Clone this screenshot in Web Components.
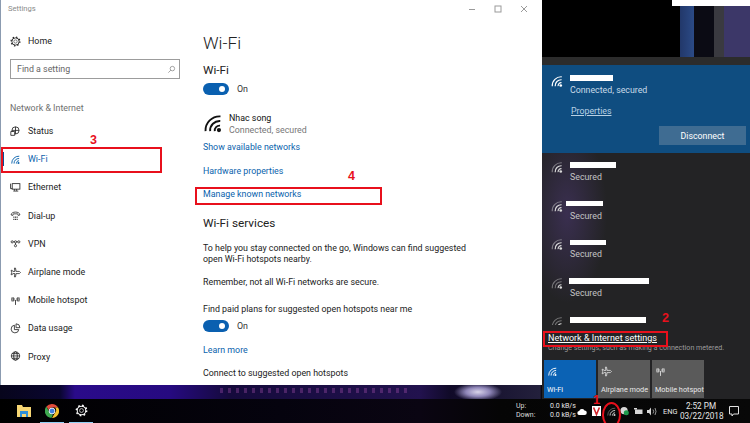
<!DOCTYPE html>
<html lang="en"><head><meta charset="utf-8"><title>Wi-Fi settings</title>
<style>
html,body{margin:0;padding:0;background:#000;overflow:hidden}
body{font-family:Roboto,"Liberation Sans",sans-serif}
</style></head><body>
<ui-desktop>
  <settings-window slot="window"></settings-window>
  <network-flyout slot="flyout"></network-flyout>
  <task-bar slot="bar"></task-bar>
  <red-box style="left:1px;top:147px;width:157px;height:22px"></red-box>
  <red-box style="left:195px;top:187px;width:183px;height:14px"></red-box>
  <red-box style="left:543px;top:331px;width:121px;height:12px"></red-box>
  <red-num style="left:90px;top:133px">3</red-num>
  <red-num style="left:348px;top:169px">4</red-num>
  <red-num style="left:662px;top:311px">2</red-num>
  <red-num style="left:593px;top:393px">1</red-num>
  <red-ring></red-ring>
</ui-desktop>
<script>
const wifiPath=(o)=>`<circle cx="15.4" cy="16.4" r="1.9" fill="currentColor"/><g fill="none" stroke="currentColor" stroke-width="1.7">
 <path d="M11.6 17.4A4.4 4.4 0 0 1 16.4 12.4"/>
 <path d="M7.4 17.4A8.6 8.6 0 0 1 16.6 8.2"/></g>
 <g fill="none" stroke="currentColor" stroke-width="1.7" opacity="${o}"><path d="M3.2 17.4A12.8 12.8 0 0 1 16.8 4"/></g>`;
const ICONS={
 wifi:wifiPath(1),
 wifiweak:`<circle cx="15.4" cy="16.4" r="1.8" fill="currentColor"/><g fill="none" stroke="currentColor" stroke-width="1.5"><path d="M11.6 17.4A4.4 4.4 0 0 1 16.4 12.4"/></g><g fill="none" stroke="currentColor" stroke-width="1.5" opacity=".45"><path d="M7.4 17.4A8.6 8.6 0 0 1 16.6 8.2"/><path d="M3.2 17.4A12.8 12.8 0 0 1 16.8 4"/></g>`,
 wifimid:wifiPath(.45),
 gear:`<g fill="none" stroke="currentColor"><circle cx="10" cy="10" r="3"/><circle cx="10" cy="10" r="6.6" stroke-width="1.6"/><circle cx="10" cy="10" r="8" stroke-width="2.2" stroke-dasharray="2.6 3.68"/></g>`,
 globe:`<g fill="none" stroke="currentColor" stroke-width="1.5"><circle cx="10" cy="9" r="7.6"/><path d="M2.4 9h15.2M4 4.8h12M4 13.2h12"/><ellipse cx="10" cy="9" rx="3.4" ry="7.6"/></g>`,
 status:`<g fill="none" stroke="currentColor" stroke-width="1.5"><circle cx="10" cy="8" r="6.5"/><path d="M3.5 8h13M10 1.5v13"/><path d="M1.5 10v7h7v-7z" fill="#fff"/></g>`,
 ethernet:`<g fill="none" stroke="currentColor" stroke-width="1.5"><rect x="4" y="3" width="14" height="10"/><path d="M1 3v9h3M8 13v3M12 13v3M6 16.5h9"/></g>`,
 dial:`<g fill="none" stroke="currentColor" stroke-width="1.4"><path d="M2 9c0-7 16-7 16 0l-3 1-1-3H6L5 10z"/></g><g fill="currentColor"><rect x="6" y="12" width="2" height="2"/><rect x="9" y="12" width="2" height="2"/><rect x="12" y="12" width="2" height="2"/><rect x="6" y="16" width="2" height="2"/><rect x="9" y="16" width="2" height="2"/><rect x="12" y="16" width="2" height="2"/></g>`,
 vpn:`<g fill="none" stroke="currentColor" stroke-width="1.4"><circle cx="4" cy="7" r="2"/><circle cx="10" cy="7" r="2"/><circle cx="16" cy="7" r="2"/><path d="M6 7h2M12 7h2M10 9v3"/><circle cx="10" cy="14" r="2"/></g>`,
 plane:`<path fill="none" stroke="currentColor" stroke-width="1.4" d="M8 2h2l1 6h6l2 2-2 2h-6l-1 6H8l1-6H5l-1 2H2l1-4-1-4h2l1 2h4z"/>`,
 hotspot:`<g fill="none" stroke="currentColor" stroke-width="1.5"><path d="M10 9v9M4 4q-2 4 0 8M16 4q2 4 0 8"/><rect x="5.6" y="5" width="1.6" height="6" rx=".8"/><rect x="12.8" y="5" width="1.6" height="6" rx=".8"/></g>`,
 data:`<g fill="none" stroke="currentColor" stroke-width="1.5"><path d="M8 4a7 7 0 1 0 8 8H8z"/><path d="M11 1.5a7 7 0 0 1 7 7h-7z"/></g>`,
 search:`<g fill="none" stroke="currentColor" stroke-width="1.3"><circle cx="12" cy="8" r="5"/><path d="M8.5 11.5L3 17"/></g>`
};
function def(name,css,html){
 customElements.define(name,class extends HTMLElement{
  connectedCallback(){ if(this.shadowRoot)return;
   const s=this.attachShadow({mode:'open'});
   const h=typeof html==='function'?html(this):html;
   s.innerHTML=`<style>${css}</style>${h}`;
  }
 });
}
def('ui-icon',`:host{display:inline-block;width:var(--s,12px);height:var(--s,12px);flex:none;line-height:0}svg{width:100%;height:100%;display:block}`,
 el=>`<svg viewBox="0 0 20 20">${ICONS[el.getAttribute('name')]||''}</svg>`);

def('ui-desktop',`
:host{display:grid;grid-template-columns:542px 208px;grid-template-rows:399px 24px;width:750px;height:423px;position:relative;overflow:hidden;
 background:
 radial-gradient(ellipse 24px 9px at 478px 392px,#d9d4ea 0,#8f86b8 50%,transparent 100%),
 repeating-linear-gradient(90deg,rgba(190,90,190,.3) 0 3px,transparent 3px 8px) 220px 388px/190px 5px no-repeat,
 linear-gradient(90deg,#07051c 0,#0a0630 60px,#2a0b8a 75px,#260a80 170px,#150a3c 230px,#22124e 420px,#100a28 450px,#23203c 540px,#000 542px);
}
::slotted([slot=window]){grid-column:1;grid-row:1}
::slotted([slot=flyout]){grid-column:2;grid-row:1}
::slotted([slot=bar]){grid-column:1/3;grid-row:2}
`,`<slot name="window"></slot><slot name="flyout"></slot><slot name="bar"></slot><slot></slot>`);

def('red-box',`:host{position:absolute;display:block;border:2px solid #e8101c;z-index:5}`,``);
def('red-num',`:host{position:absolute;display:block;z-index:6;color:#e8101c;font:700 12.5px/15px "Liberation Sans",sans-serif}`,`<slot></slot>`);
def('red-ring',`:host{position:absolute;display:block;z-index:6;left:602px;top:402px;width:15px;height:22px;border:2px solid #e8101c;border-radius:50%}`,``);

def('nav-item',`
:host{display:flex;align-items:center;height:28.2px;padding-left:10px;gap:7px;color:#222;font-size:8.9px;position:relative;--s:11px}
:host([active]){color:#0a63ad}
:host([active])::before{content:"";position:absolute;left:2px;top:7px;width:1.5px;height:14px;background:#0a4f96}
`,el=>`<ui-icon name="${el.getAttribute('icon')}"></ui-icon><span><slot></slot></span>`);

def('ui-toggle',`
:host{display:flex;align-items:center;gap:8px;height:12px;font-size:8.9px;color:#333}
i{display:block;width:26px;height:12px;border-radius:6px;background:#0a60b0;position:relative}
i::after{content:"";position:absolute;right:4px;top:3px;width:6px;height:6px;border-radius:50%;background:#fff}
`,`<i></i><span>On</span>`);

def('settings-window',`
:host{display:flex;flex-direction:column;height:385px;background:#fff;box-sizing:border-box;border-left:1px solid #8b9bb0;overflow:hidden;color:#222;font-size:8.85px}
.bar{display:flex;align-items:center;height:17px;flex:none;padding-left:7px;color:#8a8a8a;font-size:7.6px}
.bar span{flex:1}
.bar svg{width:8px;height:8px;margin-right:18px;stroke:#9a9a9a;fill:none;display:block}
.cols{display:flex;flex:1;min-height:0}
nav{width:190px;flex:none;display:flex;flex-direction:column}
.home{margin:10px 0 0 -1px;height:28px}
.search{display:flex;align-items:center;justify-content:space-between;box-sizing:border-box;margin:4px 0 0 9px;width:170px;height:20px;border:1.5px solid #9c9c9c;padding:0 3px 0 6px;color:#666;--s:9px}
.sect{margin:23px 0 0 9px;height:12px;line-height:12px;color:#6f6f6f;font-size:8.9px}
.items{margin-top:3px;margin-left:-1px}
main{flex:1;padding-left:12px;min-width:0}
h1{font:300 17.4px/24px Roboto,sans-serif;margin:14px 0 0}
h2{font:400 11.8px/18px Roboto,sans-serif;margin:6px 0 0}
p{margin:0;line-height:12px}
a{display:block;color:#0a63ad;line-height:12px;text-decoration:none}
.net{display:flex;gap:5px;margin:17px 0 0 -1px;align-items:flex-start;--s:22px;color:#111}
.net div{line-height:12px}.net small{display:block;font-size:8.85px;color:#777}
.t1{margin-top:4px}.l1{margin-top:5px}.l2{margin-top:12px}.l3{margin-top:11px}
h2.s{margin-top:14px}
.p1{margin-top:11px;line-height:11px}.p2{margin-top:11px}.p3{margin-top:15px}.t2{margin-top:5px}.l4{margin-top:12px}.p4{margin-top:11px}
`,`
<div class="bar"><span>Settings</span>
 <svg viewBox="0 0 8 8"><path d="M1 4.5h6"/></svg>
 <svg viewBox="0 0 8 8"><rect x="1" y="1" width="6" height="6"/></svg>
 <svg viewBox="0 0 8 8" style="margin-right:14px"><path d="M1 1l6 6M7 1L1 7"/></svg></div>
<div class="cols">
<nav>
 <nav-item icon="gear" class="home">Home</nav-item>
 <div class="search"><span>Find a setting</span><ui-icon name="search"></ui-icon></div>
 <div class="sect">Network &amp; Internet</div>
 <div class="items">
 <nav-item icon="status">Status</nav-item>
 <nav-item icon="wifi" active>Wi-Fi</nav-item>
 <nav-item icon="ethernet">Ethernet</nav-item>
 <nav-item icon="dial">Dial-up</nav-item>
 <nav-item icon="vpn">VPN</nav-item>
 <nav-item icon="plane">Airplane mode</nav-item>
 <nav-item icon="hotspot">Mobile hotspot</nav-item>
 <nav-item icon="data">Data usage</nav-item>
 <nav-item icon="globe">Proxy</nav-item>
 </div>
</nav>
<main>
 <h1>Wi-Fi</h1>
 <h2>Wi-Fi</h2>
 <ui-toggle class="t1"></ui-toggle>
 <div class="net"><ui-icon name="wifi"></ui-icon><div>Nhac song<small>Connected, secured</small></div></div>
 <a class="l1">Show available networks</a>
 <a class="l2">Hardware properties</a>
 <a class="l3">Manage known networks</a>
 <h2 class="s">Wi-Fi services</h2>
 <p class="p1">To help you stay connected on the go, Windows can find suggested<br>open Wi-Fi hotspots nearby.</p>
 <p class="p2">Remember, not all Wi-Fi networks are secure.</p>
 <p class="p3">Find paid plans for suggested open hotspots near me</p>
 <ui-toggle class="t2"></ui-toggle>
 <a class="l4">Learn more</a>
 <p class="p4">Connect to suggested open hotspots</p>
</main>
</div>`);

def('wifi-net',`
:host{display:flex;height:38.7px;flex:none;padding-left:8px;gap:6px;color:#c4c4c4;--s:14px;font-size:8.8px;position:relative}
ui-icon{margin-top:1px;color:#d8d8d8}
.t{line-height:12px}
.n{height:12px;display:flex;align-items:center;margin-left:var(--o,0)}
.n b{display:block;height:5.5px;width:var(--w);background:#fff}
`,el=>`<ui-icon name="${el.getAttribute('icon')}"></ui-icon><div class="t"><div class="n" style="--w:${el.getAttribute('w')}px;--o:${el.getAttribute('o')||0}px"><b></b></div>${el.hasAttribute('hidden-sub')?'':'<div>Secured</div>'}</div>`);

def('quick-tile',`
:host{display:flex;flex-direction:column;justify-content:space-between;box-sizing:border-box;width:52px;height:38px;padding:6px 1px 3px 3px;background:#5a5a5a;color:#e8e8e8;font-size:7.3px;line-height:10px;--s:11px;white-space:nowrap}
:host([on]){background:#0b62b4;color:#fff}
`,el=>`<ui-icon name="${el.getAttribute('icon')}"></ui-icon><span><slot></slot></span>`);

def('network-flyout',`
:host{display:flex;flex-direction:column;height:399px;box-sizing:border-box;position:relative;color:#fff;
 background:linear-gradient(90deg,#000 0,#000 138px,#22386a 138px,#2b4a86 152px,#0b0b14 152px,#0b0b14 172px,#3a3a40 172px,#3a3a40 182px,#3c3768 182px,#3c3768 208px)}
.w{height:5.5px;margin-left:130px;background:#fff;flex:none}
.top{height:51.5px;flex:none}
.strip{height:8px;background:#2c2c2c;flex:none}
.active{height:88px;background:#0f4d80;flex:none;position:relative;box-sizing:border-box;padding:9px 0 0 8px;display:flex;gap:6px;--s:14px}
.active .bar{display:block;width:43px;height:5.5px;background:#fff;margin:1px 0 3px}
.active .t{font-size:8.8px;line-height:12px;color:#c9dbe8}
.active a{display:block;margin-top:9.5px;margin-left:1px;color:#b9d1e4;text-decoration:underline}
.active button{position:absolute;right:4px;top:61px;width:87px;height:19px;border:0;background:#3f6c92;color:#fff;font:8.8px Roboto,sans-serif;padding:0}
.list{flex:1;min-height:0;overflow:hidden;padding-top:6px;box-sizing:border-box;
 background:radial-gradient(ellipse 40px 90px at 25px 60px,#3a2f50 0,rgba(35,35,35,0) 100%),#232325}
.foot{height:35px;flex:none;background:#232325;padding:7px 0 0 6px;box-sizing:border-box}
.foot a{display:block;line-height:12px;height:12px;font-size:9px;text-decoration:underline;color:#fff}
.foot small{display:block;margin-top:-1px;font-size:7.1px;line-height:10px;color:#9c9c9c;white-space:nowrap}
.tiles{display:flex;gap:2px;padding:0 0 1px 2px;background:#232325;flex:none}
`,`
<div class="w"></div><div class="top"></div>
<div class="strip"></div>
<div class="active"><ui-icon name="wifi"></ui-icon><div class="t"><span class="bar"></span>Connected, secured<a>Properties</a></div><button>Disconnect</button></div>
<div class="list">
 <wifi-net icon="wifimid" w="46"></wifi-net>
 <wifi-net icon="wifimid" w="37" o="-4"></wifi-net>
 <wifi-net icon="wifimid" w="36"></wifi-net>
 <wifi-net icon="wifiweak" w="80" o="-1"></wifi-net>
 <wifi-net icon="wifiweak" w="76" hidden-sub></wifi-net>
</div>
<div class="foot"><a>Network &amp; Internet settings</a><small>Change settings, such as making a connection metered.</small></div>
<div class="tiles">
 <quick-tile icon="wifi" on>Wi-Fi</quick-tile>
 <quick-tile icon="plane">Airplane mode</quick-tile>
 <quick-tile icon="hotspot">Mobile hotspot</quick-tile>
</div>`);

def('task-bar',`
:host{display:flex;align-items:center;height:24px;background:linear-gradient(90deg,#000 0,#05030e 280px,#0a0512 420px,#050505 500px,#080808 100%);color:#e6e6e6;font-size:7px;position:relative}
.app{width:24px;height:24px;display:flex;align-items:center;justify-content:center;box-sizing:border-box;border-bottom:1.5px solid transparent}
.app.run{border-bottom-color:#8fd0f5}
.apps{display:flex;gap:5px;margin-left:12px}
.apps svg{width:14px;height:14px;display:block}
.tray{margin-left:auto;display:flex;align-items:center;height:24px}
.sp{width:34px;line-height:9px;color:#ddd}
.sp2{width:27px;line-height:9px;white-space:nowrap}
.tray svg{display:block}
.eng{margin:0 3px 0 6px;width:14px;white-space:nowrap;font-size:7.4px}
.clock{width:42px;text-align:center;line-height:10px;font-size:8.2px}
.n{margin:0 11px 0 7px}
`,`
<div class="apps">
 <div class="app"><svg viewBox="0 0 14 14" style="margin-left:-1px"><path fill="#f7d774" d="M0 1h5l1 2h8v10H0z"/><path fill="#2f8fd8" d="M3 7h8v6H9v-3H5v3H3z"/></svg></div>
 <div class="app run" style="margin-left:-1px"><svg viewBox="0 0 14 14"><path fill="#e04a3a" d="M7 0a7 7 0 0 1 6.1 3.5H7A3.5 3.5 0 0 0 3.6 6L1.4 2.6A7 7 0 0 1 7 0z"/><path fill="#f5c330" d="M13.1 3.5A7 7 0 0 1 7 14l3-5.2a3.5 3.5 0 0 0 0-5.3z"/><path fill="#3ea84f" d="M1.4 2.6L4.4 8.5A3.5 3.5 0 0 0 8 10.4L6.4 14A7 7 0 0 1 1.4 2.6z"/><circle cx="7" cy="7" r="2.9" fill="#3a7ee0" stroke="#fff" stroke-width=".9"/></svg></div>
 <div class="app run"><ui-icon name="gear" style="--s:13px;color:#fff"></ui-icon></div>
</div>
<div class="tray">
 <div class="sp">Up:<br>Down:</div>
 <div class="sp2">0.0 kB/s<br>0.0 kB/s</div>
 <svg width="10" height="7" viewBox="0 0 9 7" style="margin-right:5px"><path fill="#fff" d="M2 7a2 2 0 0 1-.3-4A3 3 0 0 1 7 2.4 2.3 2.3 0 0 1 7 7z"/></svg>
 <svg width="9" height="10" viewBox="0 0 9 10" style="margin-right:5px"><rect width="9" height="10" fill="#fff"/><path d="M1.6 1.5L4.5 8.5 7.4 1.5" fill="none" stroke="#d2232a" stroke-width="1.6"/></svg>
 <ui-icon name="wifimid" style="--s:11px;color:#d0d0d0;margin-right:3px"></ui-icon>
 <svg width="9" height="10" viewBox="0 0 10 10" style="margin-right:5px"><circle cx="4.5" cy="4.5" r="4" fill="#d8d8d8"/><circle cx="7" cy="7" r="2.8" fill="#1f9a4c"/></svg>
 <svg width="9" height="7" viewBox="0 0 9 7" style="margin-right:4px"><rect x="1" y="1.5" width="7.5" height="4.5" fill="#d8d8d8"/><rect y="0" width="3" height="1.5" fill="#d8d8d8"/></svg>
 <svg width="10" height="9" viewBox="0 0 10 9"><path fill="#d8d8d8" d="M0 3h2l2-2.5v8L2 6H0z"/><path d="M6 2.5q1.4 2 0 4M8 1q2 3.5 0 7" fill="none" stroke="#bbb" stroke-width=".8"/></svg>
 <span class="eng">ENG</span>
 <div class="clock">2:52 PM<br>03/22/2018</div>
 <svg class="n" width="10" height="11" viewBox="0 0 10 11"><path d="M.5 .5h9v7.5H4.5L3 10V8H.5z" fill="none" stroke="#e0e0e0"/></svg>
</div>`);
</script>
</body></html>
